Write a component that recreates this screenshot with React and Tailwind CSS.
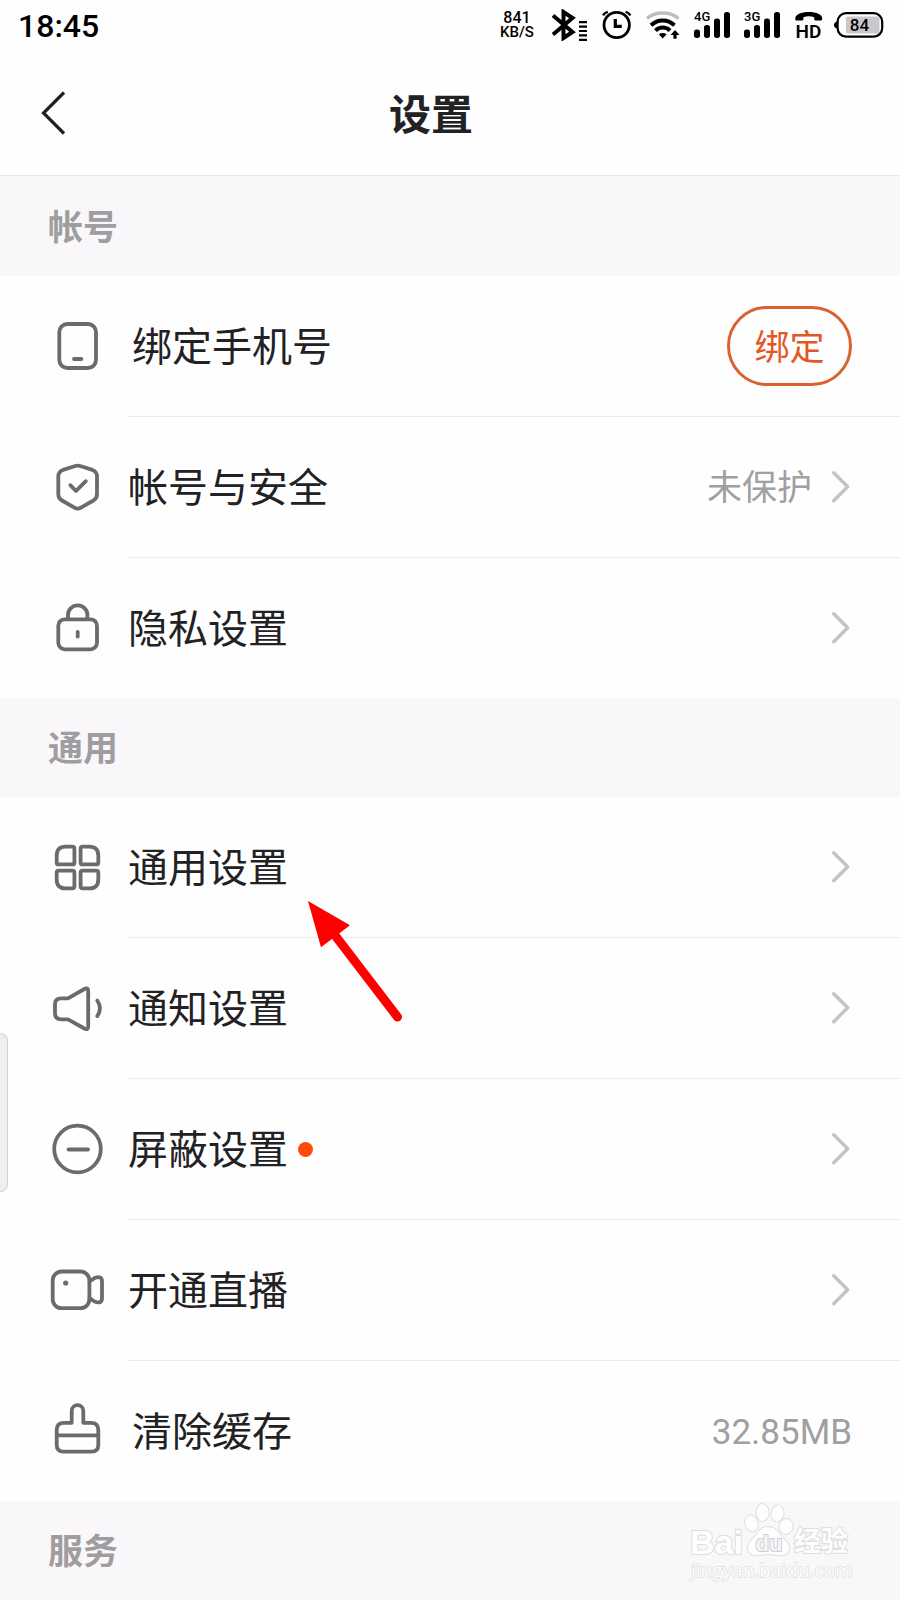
import React from "react";
import clsx from "clsx";

/* ---------- status bar icons ---------- */

const BluetoothIcon = () => (
  <svg width="40" height="32" viewBox="0 0 40 32" fill="none" stroke="#000">
    <path d="M4 6.5L23.5 23L14.5 29V3L23.5 9L4 25.5" strokeWidth="4" />
    <path
      d="M30 13.2h8M30 17.6h8M30 22h8M30 26.4h8M30 30.8h8"
      strokeWidth="2.2"
    />
  </svg>
);

const AlarmIcon = () => (
  <svg width="36" height="32" viewBox="0 0 36 32" fill="none" stroke="#000">
    <circle cx="17.7" cy="16" r="12.7" strokeWidth="2.8" />
    <path d="M16.3 10V17.3H22.8" strokeWidth="3.2" />
    <path d="M4 6.3Q5.6 3.6 8.8 2.8M31.4 6.3Q29.8 3.6 26.6 2.8" strokeWidth="2.4" />
  </svg>
);

const WifiIcon = () => (
  <svg width="38" height="32" viewBox="0 0 38 32" fill="none">
    <path d="M2 9.5C10.5 2.2 25 2.2 33.5 9.5" stroke="#bdbdbd" strokeWidth="3.4" />
    <path d="M6 16.3C13 9.8 22.5 9.8 29.5 16.3" stroke="#000" strokeWidth="4" />
    <path d="M10.5 21.6C14.5 17.6 21 17.6 25 21.6" stroke="#000" strokeWidth="4" />
    <path d="M13.8 25.2Q17.7 22.6 21.6 25.2L17.7 29.6Z" fill="#000" />
    <path d="M30 21L34.5 26H31.6V29.8H28.4V26H25.5Z" fill="#000" />
  </svg>
);

const SignalIcon = ({ label }) => (
  <svg width="40" height="32" viewBox="0 0 40 32" fill="#000">
    <text x="1" y="12" fontSize="13" fontWeight="500">
      {label}
    </text>
    <rect x="1" y="20.5" width="6" height="8.4" rx="2.6" />
    <rect x="11" y="16" width="6" height="12.9" rx="2.6" />
    <rect x="21" y="9.6" width="6" height="19.3" rx="2.6" />
    <rect x="31" y="3" width="6" height="25.9" rx="2.6" />
  </svg>
);

const HdIcon = () => (
  <svg width="31" height="40" viewBox="0 -4 31 40" fill="#000">
    <path d="M2.3 9.5C2.3 5.5 8 3 15.8 3S29.2 5.5 29.2 9.5V10.2Q29.2 11.6 27.8 11.6H22.6Q21.2 11.6 21.2 10.2V8.2Q15.8 6.2 10.4 8.2V10.2Q10.4 11.6 9 11.6H3.7Q2.3 11.6 2.3 10.2Z" />
    <text x="15.5" y="29" fontSize="19" fontWeight="600" textAnchor="middle">
      HD
    </text>
  </svg>
);

const BatteryIcon = () => (
  <svg width="50" height="32" viewBox="0 0 50 32">
    <path d="M3 12.5Q0 13.5 0 16T3 19.5Z" fill="#000" />
    <rect x="3.6" y="4.2" width="44.6" height="23.4" rx="8.5" fill="none" stroke="#000" strokeWidth="2.2" />
    <rect x="12" y="7.6" width="33.5" height="16.8" rx="2" fill="#c9c7cb" />
    <text x="25.5" y="22.2" fontSize="17" fontWeight="500" textAnchor="middle">
      84
    </text>
  </svg>
);

/* ---------- row icons ---------- */

const RowIcon = ({ children }) => (
  <svg
    className="shrink-0"
    width="60"
    height="60"
    viewBox="0 0 60 60"
    fill="none"
    stroke="#6b6b6b"
    strokeWidth="3.8"
    strokeLinecap="round"
    strokeLinejoin="round"
    aria-hidden="true"
  >
    {children}
  </svg>
);

const icons = {
  phone: (
    <RowIcon>
      <rect x="11.3" y="7" width="36.7" height="44" rx="8" />
      <path d="M26 42H33.4" />
    </RowIcon>
  ),
  shield: (
    <RowIcon>
      <path d="M26.5 8.2L15 11.9Q10.3 13.7 10.3 18.3V36.3Q10.3 40.3 14 42.5L26.5 49.7Q29.7 51.4 33 49.7L45.4 42.5Q49 40.3 49 36.3V18.3Q49 13.7 44.4 11.9L33 8.2Q29.7 7.1 26.5 8.2Z" />
      <path d="M22.3 27.2L28 33L37.8 23.2" />
    </RowIcon>
  ),
  lock: (
    <RowIcon>
      <rect x="10.3" y="21.3" width="38.7" height="30" rx="6.5" />
      <path d="M20 21V17a9.7 9.7 0 0 1 19.4 0V21" />
      <path d="M29.7 34V38.5" />
    </RowIcon>
  ),
  grid: (
    <RowIcon>
      <path d="M17.6 8.7H24.4Q26.4 8.7 26.4 10.7V24.4Q26.4 26.4 24.4 26.4H10.7Q8.7 26.4 8.7 24.4V17.6Q8.7 8.7 17.6 8.7Z" />
      <path d="M41.4 8.7H34.6Q32.6 8.7 32.6 10.7V24.4Q32.6 26.4 34.6 26.4H48.3Q50.3 26.4 50.3 24.4V17.6Q50.3 8.7 41.4 8.7Z" />
      <path d="M17.6 50.3H24.4Q26.4 50.3 26.4 48.3V34.6Q26.4 32.6 24.4 32.6H10.7Q8.7 32.6 8.7 34.6V41.4Q8.7 50.3 17.6 50.3Z" />
      <path d="M41.4 50.3H34.6Q32.6 50.3 32.6 48.3V34.6Q32.6 32.6 34.6 32.6H48.3Q50.3 32.6 50.3 34.6V41.4Q50.3 50.3 41.4 50.3Z" />
    </RowIcon>
  ),
  speaker: (
    <RowIcon>
      <path d="M20 19.3L36.4 10Q40.2 8 40.2 12V47.5Q40.2 51.5 36.4 49.5L20 40.3H13Q7 40.3 7 34.3V25.3Q7 19.3 13 19.3Z" />
      <path d="M49.3 21.5Q54.6 29.3 49.3 37.1" />
    </RowIcon>
  ),
  block: (
    <RowIcon>
      <circle cx="29.5" cy="29" r="23.3" />
      <path d="M20.5 29.5H40" />
    </RowIcon>
  ),
  camera: (
    <RowIcon>
      <rect x="4.7" y="10.5" width="36.7" height="36.7" rx="9" />
      <circle cx="17.7" cy="22" r="2.6" fill="#6b6b6b" stroke="none" />
      <path d="M41.5 20.5L46.5 17.1Q54 14 54 20.5V37.1Q54 43.5 46.5 40.5L41.5 37.1" />
    </RowIcon>
  ),
  brush: (
    <RowIcon>
      <path d="M23.7 21.8V10a5.8 5.8 0 0 1 11.6 0V21.8H43Q50.3 21.8 50.3 29V44Q50.3 50.7 43.6 50.7H15.4Q8.7 50.7 8.7 44V29Q8.7 21.8 16 21.8Z" />
      <path d="M9 34.3H50" />
    </RowIcon>
  ),
};

const Chevron = () => (
  <svg
    width="22"
    height="36"
    viewBox="0 0 22 36"
    fill="none"
    stroke="#c3c2c4"
    strokeWidth="3.4"
    strokeLinecap="round"
    strokeLinejoin="round"
    aria-hidden="true"
  >
    <path d="M3.7 3.7L17.7 17.7L3.7 31.7" />
  </svg>
);

const PointerArrow = () => (
  <svg
    className="absolute left-[306px] top-[102px] z-10"
    width="100"
    height="124"
    viewBox="0 0 100 124"
    aria-hidden="true"
  >
    <path d="M28 35L91.5 118" stroke="#fe0000" strokeWidth="9" strokeLinecap="round" />
    <path d="M2 2L44 26.3L15 48.3Z" fill="#fe0000" />
  </svg>
);

const Watermark = () => (
  <svg
    className="absolute right-11 top-0"
    width="170"
    height="86"
    viewBox="0 0 170 86"
    fill="#fefefe"
    stroke="#dedde1"
    strokeWidth="2"
    paintOrder="stroke"
  >
    <text x="4" y="53" fontSize="34" fontWeight="700" fontFamily="Liberation Sans, sans-serif">
      Bai
    </text>
    <ellipse cx="65.5" cy="22.5" rx="6" ry="8" transform="rotate(-14 65.5 22.5)" />
    <ellipse cx="76.5" cy="11.5" rx="6" ry="8.5" />
    <ellipse cx="91.5" cy="12.5" rx="6" ry="8" transform="rotate(10 91.5 12.5)" />
    <ellipse cx="100" cy="25.5" rx="6.5" ry="7.5" transform="rotate(16 100 25.5)" />
    <path d="M82 26C88 26 91 30 94 34C98 39 104 42 103 48C102 54 96 55 91 54Q82 52 74 54C68 55 62 53 62 47C62 41 67 38 71 33C74 29 76 26 82 26Z" />
    <text
      x="83"
      y="50"
      fontSize="22"
      fontWeight="700"
      textAnchor="middle"
      fontFamily="Liberation Sans, sans-serif"
      fill="#f4f3f6"
      stroke="#cfced2"
    >
      du
    </text>
    <text x="108" y="50" fontSize="27" fontWeight="700" fontFamily="Noto Sans CJK SC, sans-serif">
      经验
    </text>
    <text x="5" y="76" fontSize="19" strokeWidth="1.4" fontFamily="Open Sans, sans-serif">
      jingyan.baidu.com
    </text>
  </svg>
);

/* ---------- data ---------- */

const sections = [
  {
    title: "帐号",
    rows: [
      { label: "绑定手机号", icon: "phone", action: "绑定" },
      { label: "帐号与安全", icon: "shield", note: "未保护", link: true },
      { label: "隐私设置", icon: "lock", link: true },
    ],
  },
  {
    title: "通用",
    rows: [
      { label: "通用设置", icon: "grid", link: true, pointer: true },
      { label: "通知设置", icon: "speaker", link: true },
      { label: "屏蔽设置", icon: "block", link: true, dot: true },
      { label: "开通直播", icon: "camera", link: true },
      { label: "清除缓存", icon: "brush", value: "32.85MB" },
    ],
  },
];

const SectionTitle = ({ children }) => (
  <h2 className="flex h-[99px] items-center pb-1 pl-12 text-[35px] leading-[48px] font-bold text-[#9f9da0]">
    {children}
  </h2>
);

const RowContent = ({ row, last }) => (
  <>
    {icons[row.icon]}
    <span
      className={clsx(
        "ml-5 flex min-w-0 flex-1 items-center self-stretch pr-12",
        !last && "border-b border-[#ebebeb]",
        !row.link && "pl-1"
      )}
    >
      <span className="pb-1 text-[40px] leading-[56px] text-[#222124]">
        {row.label}
      </span>
      {row.dot && <span className="ml-2.5 size-[15px] rounded-full bg-[#ff4b0a]" />}
      <span className="ml-auto flex items-center gap-[18px]">
        {row.note && (
          <span className="pb-1 text-[35px] leading-[48px] text-[#a09fa1]">
            {row.note}
          </span>
        )}
        {row.value && (
          <span className="pt-1 font-[Roboto,sans-serif] text-[35px] leading-[48px] text-[#a09fa1]">
            {row.value}
          </span>
        )}
        {row.action && (
          <button className="h-20 w-[125px] rounded-full border-[3px] border-[#d9622f] pb-0.5 text-[35px] leading-[48px] text-[#e2561f]">
            {row.action}
          </button>
        )}
        {row.link && <Chevron />}
      </span>
    </span>
  </>
);

const Row = ({ row, last }) => (
  <li className={clsx("relative", last ? "h-[140px]" : "h-[141px]")}>
    {row.link ? (
      <a href="#" className="flex h-full items-center pl-12">
        <RowContent row={row} last={last} />
      </a>
    ) : (
      <div className="flex h-full items-center pl-12">
        <RowContent row={row} last={last} />
      </div>
    )}
    {row.pointer && <PointerArrow />}
  </li>
);

const App = () => {
  return (
    <div className="relative min-h-screen bg-[#f9f7fa] font-[Noto_Sans_CJK_SC,sans-serif]">
      <div className="flex h-[50px] items-center justify-between bg-[#fefefe] pr-4 pl-[18px] font-[Roboto,sans-serif] text-black">
        <span className="pt-0.5 text-[32px] leading-[48px] font-medium">18:45</span>
        <div className="flex items-center gap-2.5">
          <div className="flex w-11 flex-col items-center font-medium">
            <span className="text-[16px] leading-[14px]">841</span>
            <span className="text-[15px] leading-[14px]">KB/S</span>
          </div>
          <BluetoothIcon />
          <AlarmIcon />
          <WifiIcon />
          <SignalIcon label="4G" />
          <SignalIcon label="3G" />
          <HdIcon />
          <BatteryIcon />
        </div>
      </div>

      <header className="flex h-[126px] items-center border-b border-[#e6e5e8] bg-[#fefefe] pr-[104px] pl-10">
        <button aria-label="返回">
          <svg width="26" height="44" viewBox="0 0 26 44" fill="none" stroke="#222124" strokeWidth="3.2">
            <path d="M24 1.5L3.5 22L24 42.5" />
          </svg>
        </button>
        <h1 className="flex-1 pb-0.5 text-center text-[42px] leading-[60px] font-bold text-[#222124]">
          设置
        </h1>
      </header>

      <main className="pt-px">
        {sections.map((section) => (
          <section key={section.title}>
            <SectionTitle>{section.title}</SectionTitle>
            <ul className="bg-[#fefefe]">
              {section.rows.map((row, i) => (
                <Row key={row.label} row={row} last={i === section.rows.length - 1} />
              ))}
            </ul>
          </section>
        ))}
        <section className="relative">
          <SectionTitle>服务</SectionTitle>
          <Watermark />
        </section>
      </main>

      {/* edge panel handle */}
      <div className="absolute top-[1033px] left-0 h-[159px] w-2 rounded-r-lg border border-l-0 border-[#d3d1d3] bg-[#f0eef0]" />
    </div>
  );
};

export default App;
